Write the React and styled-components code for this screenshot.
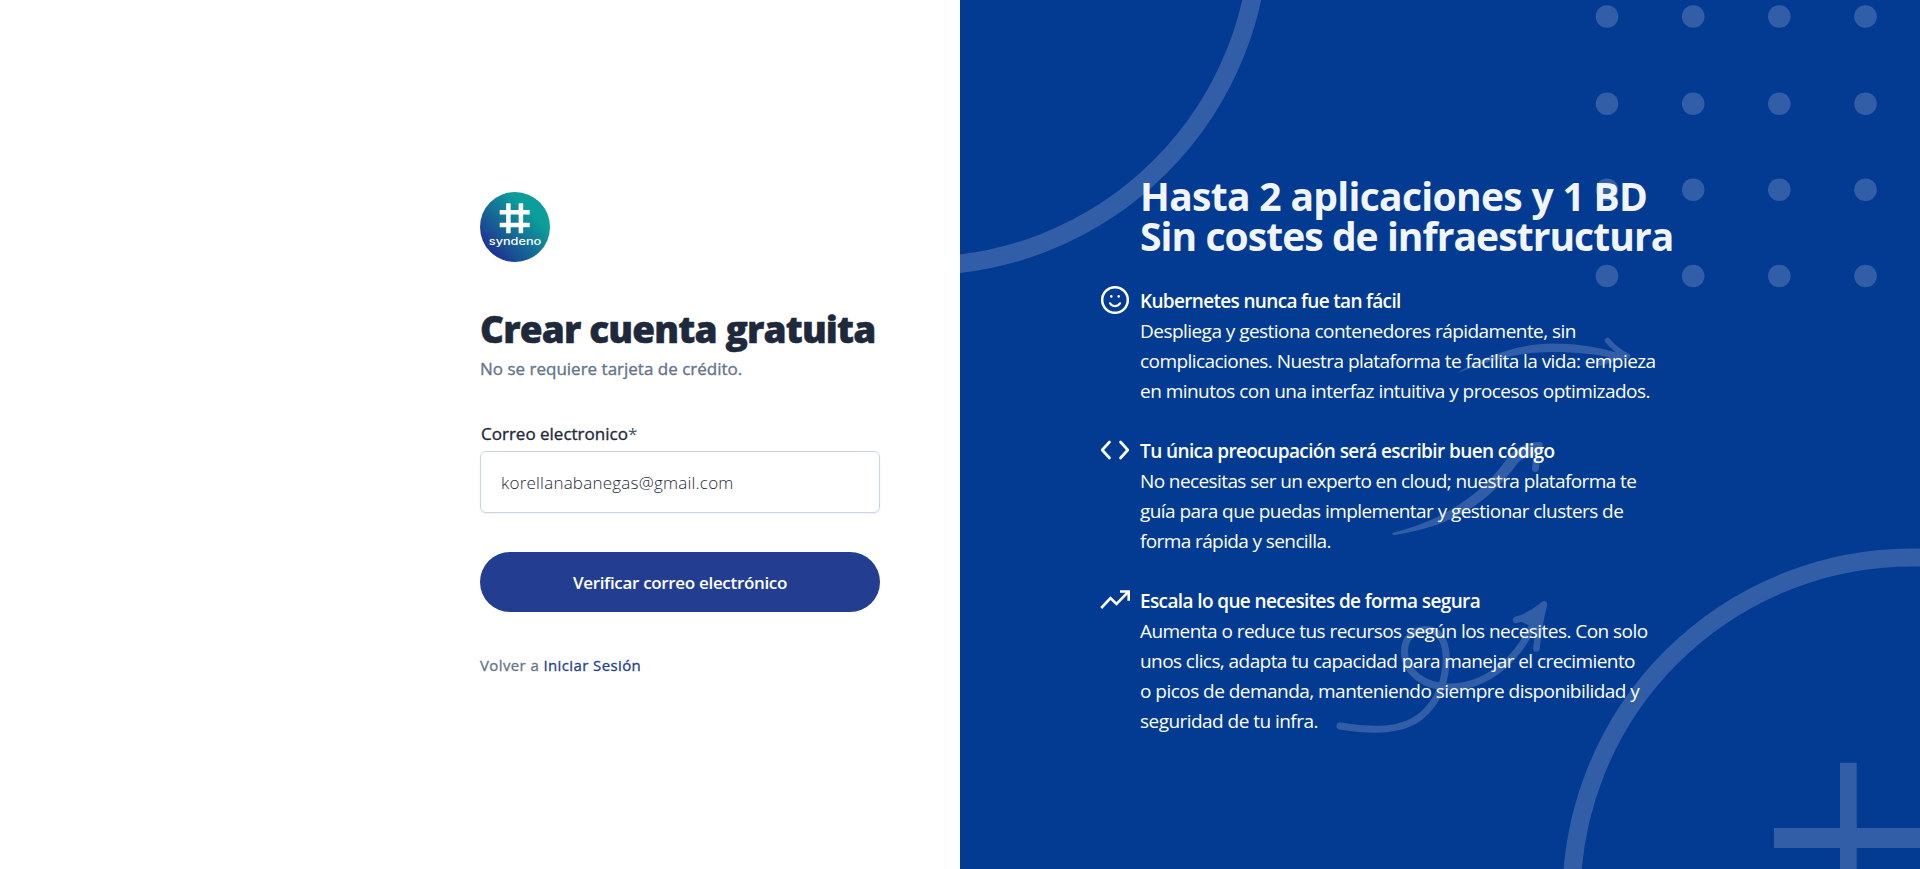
import React from "react";
import styled, { createGlobalStyle } from "styled-components";

const Global = createGlobalStyle`
  *{box-sizing:border-box}
  body{margin:0;font-family:"Open Sans","Noto Sans",sans-serif;background:#fff}
  h1,h2,h3,p{margin:0}
`;
const Page = styled.main`display:flex;width:100%;height:869px;overflow:hidden;`;
const FormSide = styled.section`width:50%;display:flex;justify-content:flex-end;padding:192px 80px 0 0;`;
const FormCol = styled.div`width:400px;display:flex;flex-direction:column;`;
const Logo = styled.svg`width:70px;height:70px;display:block;`;
const Line = styled.span`display:block;width:max-content;white-space:nowrap;letter-spacing:${(p) => p.$ls || 0}px;`;
const Title = styled.h1`margin-top:42px;font-size:37px;line-height:50px;font-weight:800;color:#1e293b;-webkit-text-stroke:.5px #1e293b;`;
const Sub = styled.p`margin-top:3px;font-size:17px;line-height:24px;color:#64748b;-webkit-text-stroke:.35px #64748b;`;
const Label = styled.label`margin-top:41px;padding-left:1px;font-size:17px;line-height:24px;color:#1e293b;-webkit-text-stroke:.35px #1e293b;`;
const Star = styled.span`-webkit-text-stroke:0;color:#475569;`;
const Input = styled.input`margin-top:5px;height:62px;width:400px;border:1px solid #cbd5e1;border-radius:6px;padding:0 20px;
  font:300 17px "Open Sans",sans-serif;color:#1e293b;letter-spacing:.22px;background:#fff;box-shadow:0 1px 2px rgba(0,0,0,.05);outline:none;`;
const Button = styled.button`margin-top:39px;height:60px;border:0;border-radius:30px;background:#233e91;color:#fff;display:flex;justify-content:center;align-items:center;
  font:600 17px "Open Sans",sans-serif;`;
const Back = styled.p`margin-top:42px;font-size:15px;line-height:22px;color:#64748b;-webkit-text-stroke:.3px #64748b;
  a{color:#233e91;text-decoration:none;-webkit-text-stroke:.3px #233e91;}`;
const Promo = styled.section`width:50%;position:relative;background:#033b93;padding:176px 0 0 140px;color:#fff;`;
const Decor = styled.svg`position:absolute;inset:0;width:960px;height:869px;opacity:.18;`;
const Content = styled.div`position:relative;`;
const Headline = styled.h2`padding-left:40px;font-size:39px;line-height:40px;font-weight:700;color:#f1f5f9;`;
const Feature = styled.article`display:grid;grid-template-columns:40px 1fr;margin-top:30px;font-size:19px;line-height:30px;`;
const Icon = styled.svg`width:30px;height:30px;fill:none;stroke:#fff;stroke-linecap:round;stroke-linejoin:round;`;
const FeatureTitle = styled.h3`font-size:19px;line-height:30px;font-weight:600;`;

const features = [
  { icon: "smile", title: ["Kubernetes nunca fue tan fácil", -0.67], lines: [
    ["Despliega y gestiona contenedores rápidamente, sin", -0.54],
    ["complicaciones. Nuestra plataforma te facilita la vida: empieza", -0.56],
    ["en minutos con una interfaz intuitiva y procesos optimizados.", -0.54]] },
  { icon: "code", title: ["Tu única preocupación será escribir buen código", -0.6], lines: [
    ["No necesitas ser un experto en cloud; nuestra plataforma te", -0.6],
    ["guía para que puedas implementar y gestionar clusters de", -0.56],
    ["forma rápida y sencilla.", -0.61]] },
  { icon: "trend", title: ["Escala lo que necesites de forma segura", -0.62], lines: [
    ["Aumenta o reduce tus recursos según los necesites. Con solo", -0.55],
    ["unos clics, adapta tu capacidad para manejar el crecimiento", -0.57],
    ["o picos de demanda, manteniendo siempre disponibilidad y", -0.53],
    ["seguridad de tu infra.", -0.54]] },
];

const dotColumns = [647, 733.2, 819.3, 905.5];
const dotRows = [16.5, 103.7, 189.7, 276];

const FeatureIcon = ({ name }) => (
  <Icon viewBox="0 0 30 30">
    {name === "smile" && <><circle cx="15" cy="14" r="12.8" strokeWidth="2.5" /><path d="M10 17.3a5.8 5.8 0 0 0 10 0" strokeWidth="2.2" /><path d="M11.3 10.3v.1M18.7 10.3v.1" strokeWidth="2.6" /></>}
    {name === "code" && <path d="M9.5 6 2.2 14l7.3 8M20.5 6l7.3 8-7.3 8" strokeWidth="2.7" />}
    {name === "trend" && <path d="M1.2 22 10.5 12l6 6L28 6.2M20 5.500h8.700v9.300" strokeWidth="2.6" strokeLinecap="butt" strokeLinejoin="miter" />}
  </Icon>
);

const Background = () => (
  <Decor viewBox="0 0 960 869" fill="none" stroke="#fff" strokeLinecap="round" strokeLinejoin="round">
    <circle cx="-40" cy="-73.7" r="339.8" strokeWidth="18.5" />
    <circle cx="952" cy="898" r="340.5" strokeWidth="18" />
    <g fill="#fff" stroke="none">
      {dotRows.map((y) => dotColumns.map((x) => <circle key={`${x}-${y}`} cx={x} cy={y} r="11.3" />))}
      <path d="M880 762.7h16.7V828H960v20h-63.3v21H880v-21h-66v-20h66z" />
      <path d="M496.5 373.5C530 353 563 343.500 594 343.500c25 0 47 4.500 68 10.500l-6 5c-19-5-40-7-64-7-33 0-62 8-95.500 21.500z" />
      <path d="M434 532.500C484 520 522 494 546 460c9-13 24-19 35-18 3 1 2 7-2 12-6 3-16 2-22 10-28 38-63 62-122.500 71-3 0-3-2-.5-2.500z" />
      <path d="M573 459l7-3-1 13c-1 4-7 4-7-.5z" />
    </g>
    <path d="M647.5 340.5c5 6 11 11.500 20 15.500-9 1-19 4-28.500 7.500" strokeWidth="5.500" />
    <path d="M380 726c38 6 63 4 80-9 20-16 27-40 26-63-1-16-9-24.500-20-24.500-13 0-21.500 9-21.500 22 0 21 20.500 35.500 44.500 35.500 37 0 70-27 86-67" strokeWidth="7" />
    <path d="M556 620c11-3 19-8 28-15.500-4 15-6 29-7.500 44" strokeWidth="6.500" />
    <path d="M559 619.500 584 604.500 577 628z" fill="#fff" strokeWidth="2" />
  </Decor>
);

export default function App() {
  return (
    <>
      <Global />
      <Page>
        <FormSide>
          <FormCol>
            <Logo viewBox="0 0 70 70">
              <defs><linearGradient id="brand" x1=".2" y1=".9" x2=".8" y2=".3"><stop offset="0" stopColor="#1e3492" /><stop offset=".95" stopColor="#0d9e9b" /></linearGradient></defs>
              <circle cx="35" cy="35" r="35" fill="url(#brand)" />
              <path d="M28.4 11.3v30M40.9 11.3v30M19.7 20.3h30M19.7 32.9h30" stroke="#fff" strokeWidth="4.5" />
              <text x="8.8" y="53" fill="#fff" fontFamily="Inter, sans-serif" fontSize="11" fontWeight="500" textLength="52.5" lengthAdjust="spacingAndGlyphs">syndeno</text>
            </Logo>
            <Title><Line $ls={-0.84}>Crear cuenta gratuita</Line></Title>
            <Sub><Line>No se requiere tarjeta de crédito.</Line></Sub>
            <Label htmlFor="email"><Line>Correo electronico<Star>*</Star></Line></Label>
            <Input id="email" defaultValue="korellanabanegas@gmail.com" />
            <Button><Line $ls={-0.32}>Verificar correo electrónico</Line></Button>
            <Back><Line $ls={0.39}>Volver a <a>Iniciar Sesión</a></Line></Back>
          </FormCol>
        </FormSide>
        <Promo>
          <Background />
          <Content>
            <Headline><Line $ls={-0.68}>Hasta 2 aplicaciones y 1 BD</Line><Line $ls={-0.94}>Sin costes de infraestructura</Line></Headline>
            {features.map((f) => (
              <Feature key={f.icon}>
                <FeatureIcon name={f.icon} />
                <div>
                  <FeatureTitle><Line $ls={f.title[1]}>{f.title[0]}</Line></FeatureTitle>
                  {f.lines.map(([t, ls]) => <Line key={t} $ls={ls}>{t}</Line>)}
                </div>
              </Feature>
            ))}
          </Content>
        </Promo>
      </Page>
    </>
  );
}
